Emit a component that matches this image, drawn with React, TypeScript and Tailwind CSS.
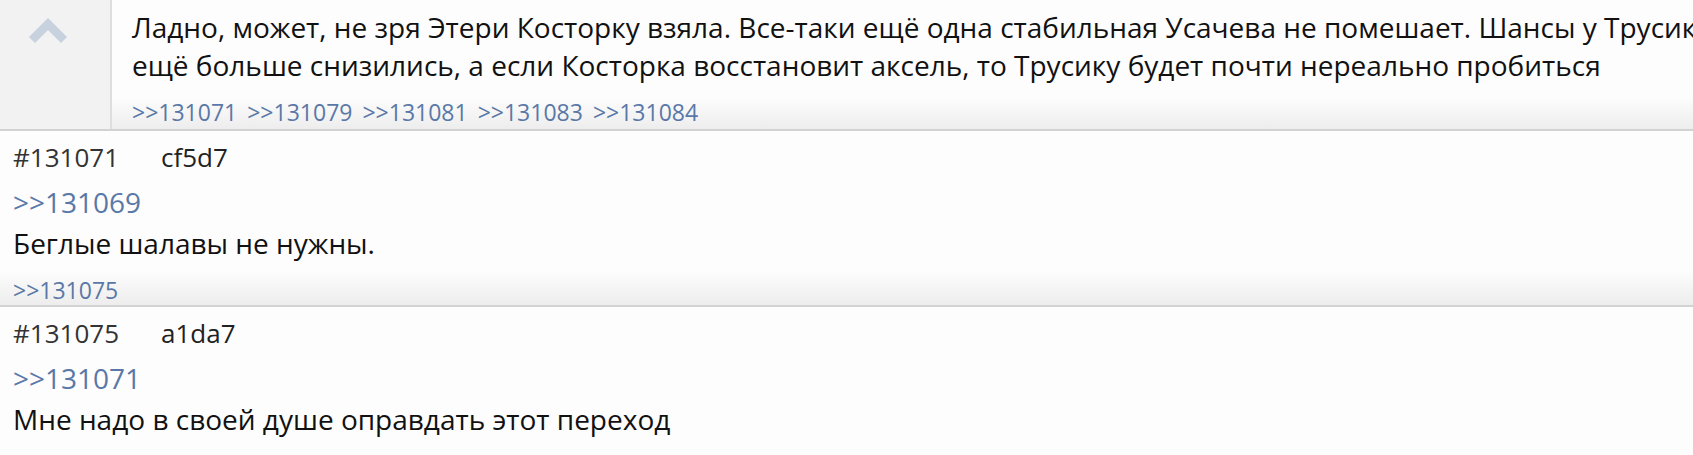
import React from 'react';

const font = { fontFamily: '"Open Sans", "Noto Sans", sans-serif' };

interface Post {
  id: number;
  hash: string;
  replyTo: number;
  text: string;
  replies: number[];
}

const posts: Post[] = [
  { id: 131071, hash: 'cf5d7', replyTo: 131069, text: 'Беглые шалавы не нужны.', replies: [131075] },
  { id: 131075, hash: 'a1da7', replyTo: 131071, text: 'Мне надо в своей душе оправдать этот переход', replies: [] },
];

function ChevronUp() {
  return (
    <svg width="40" height="30" viewBox="0 0 40 30" className="block">
      <polyline
        points="4,24 20,8 36,24"
        fill="none"
        stroke="#c8d2de"
        strokeWidth="8.5"
        strokeLinejoin="miter"
      />
    </svg>
  );
}

function ReplyLinks({ ids, className }: { ids: number[]; className: string }) {
  return (
    <div className={`flex gap-[10px] text-[#5a78a7] ${className}`}>
      {ids.map((id) => (
        <span key={id}>&gt;&gt;{id}</span>
      ))}
    </div>
  );
}

export default function App() {
  return (
    <div className="w-[1693px] h-[455px] overflow-hidden bg-[#fdfdfd] text-[#111]" style={font}>
      {/* Opened post with collapse arrow */}
      <div className="flex h-[131px] border-b-2 border-[#d2d2d2] bg-linear-to-b from-[#fdfdfd] from-75% to-[#ededed]">
        <div className="w-[112px] shrink-0 bg-[#f2f2f2] border-r-2 border-[#dedede] pt-[16px] pl-[28px]">
          <ChevronUp />
        </div>
        <div className="flex-1 min-w-0 pl-[20px] pt-[8px] overflow-hidden">
          <p className="text-[28px] leading-[38px] whitespace-nowrap">
            Ладно, может, не зря Этери Косторку взяла. Все-таки ещё одна стабильная Усачева не помешает. Шансы у Трусика
          </p>
          <p className="text-[28px] leading-[38px] whitespace-nowrap">
            ещё больше снизились, а если Косторка восстановит аксель, то Трусику будет почти нереально пробиться
          </p>
          <ReplyLinks
            ids={[131071, 131079, 131081, 131083, 131084]}
            className="text-[23px] leading-[30px] mt-[13px]"
          />
        </div>
      </div>

      {posts.map((p, i) => (
        <div
          key={p.id}
          className={`px-[13px] pt-[9px] ${
            i === 0
              ? 'h-[176px] border-b-2 border-[#d2d2d2] bg-linear-to-b from-[#fdfdfd] from-80% to-[#ededed]'
              : ''
          }`}
        >
          <div className="flex gap-[42px] text-[26px] leading-[34px] text-[#333]">
            <span>#{p.id}</span>
            <span className="text-[#222]">{p.hash}</span>
          </div>
          <div className="text-[28px] leading-[38px] mt-[9px] text-[#5a78a7]">&gt;&gt;{p.replyTo}</div>
          <p className="text-[28px] leading-[38px] mt-[3px]">{p.text}</p>
          {p.replies.length > 0 && (
            <ReplyLinks ids={p.replies} className="text-[23px] leading-[30px] mt-[13px]" />
          )}
        </div>
      ))}
    </div>
  );
}
